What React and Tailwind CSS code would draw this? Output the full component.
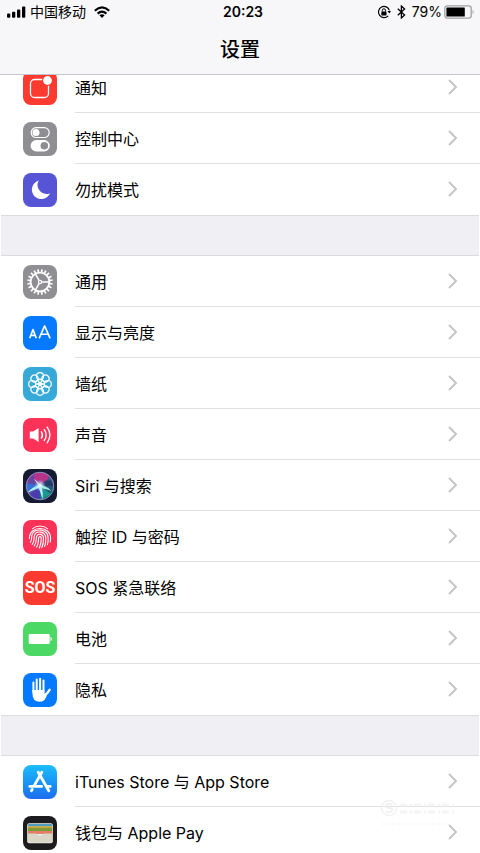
import React from 'react';

const tile = 'h-[34px] w-[34px] shrink-0 rounded-lg';

const ring = (n) => Array.from({ length: n }, (_, i) => (i * 360) / n);

function NotificationIcon() {
  return (
    <svg viewBox="0 0 34 34" className={`${tile} bg-[#fc3a30]`} aria-hidden="true">
      <rect x="7.5" y="8.5" width="18" height="18" rx="4" fill="none" stroke="#fff" strokeWidth="1.3" />
      <circle cx="24.5" cy="9.5" r="5.4" fill="#fc3a30" />
      <circle cx="24.5" cy="9.5" r="4.4" fill="#fff" />
    </svg>
  );
}

function ControlIcon() {
  return (
    <svg viewBox="0 0 34 34" className={`${tile} bg-[#8e8e93]`} aria-hidden="true">
      <rect x="8.2" y="5.7" width="18" height="9.8" rx="4.9" fill="none" stroke="#fff" strokeWidth="1.2" />
      <circle cx="13" cy="10.6" r="3.5" fill="#fff" />
      <rect x="7.6" y="18" width="19.2" height="11.4" rx="5.7" fill="#fff" />
      <circle cx="21.3" cy="23.7" r="3.8" fill="#8e8e93" />
    </svg>
  );
}

function MoonIcon() {
  return (
    <svg viewBox="0 0 34 34" className={`${tile} bg-[#5755d5]`} aria-hidden="true">
      <path d="M15.8 7.6A9.4 9.4 0 1 0 27 20.2 8.9 8.9 0 0 1 15.8 7.6Z" fill="#fff" />
    </svg>
  );
}

function GearIcon() {
  return (
    <svg viewBox="0 0 34 34" className={`${tile} bg-[#8e8e93]`} aria-hidden="true">
      <g stroke="#fff" fill="none">
        <circle cx="17" cy="17" r="9.4" strokeWidth="1.9" />
        {ring(20).map((a) => (
          <path key={a} d="M17 7.4V4.2" strokeWidth="1.7" transform={`rotate(${a + 9} 17 17)`} />
        ))}
        <circle cx="17" cy="17" r="1.6" strokeWidth="1.2" />
        {[90, 210, 330].map((a) => (
          <path key={a} d="M17 15.4V7.4" strokeWidth="1.5" transform={`rotate(${a} 17 17)`} />
        ))}
      </g>
    </svg>
  );
}

function DisplayIcon() {
  return (
    <svg viewBox="0 0 34 34" className={`${tile} bg-[#067aff]`} aria-hidden="true">
      <g fill="none" stroke="#fff" strokeLinejoin="round">
        <path d="M6.7 22.2 10 13.6 13.3 22.2M7.9 19.4H12.1" strokeWidth="1.6" />
        <path d="M16.1 22.4 21.6 9.9 27.1 22.4M18 18.3H25.2" strokeWidth="1.6" />
      </g>
    </svg>
  );
}

function WallpaperIcon() {
  return (
    <svg viewBox="0 0 34 34" className={`${tile} bg-[#36a9d8]`} aria-hidden="true">
      <g fill="none" stroke="#fff" strokeWidth="1.2">
        {ring(8).map((a) => (
          <g key={a} transform={`rotate(${a} 17 17)`}>
            <circle cx="17" cy="9.2" r="3.5" />
          </g>
        ))}
        {ring(6).map((a) => (
          <circle key={a} cx="17" cy="13.7" r="1.8" strokeWidth="0.9" transform={`rotate(${a} 17 17)`} />
        ))}
        <circle cx="17" cy="17" r="1.1" fill="#fff" />
      </g>
    </svg>
  );
}

function SoundIcon() {
  return (
    <svg viewBox="0 0 34 34" className={`${tile} bg-[#fc3259]`} aria-hidden="true">
      <path d="M6.8 13.6H10.2L15.6 10V24L10.2 20.4H6.8Z" fill="#fff" />
      <g fill="none" stroke="#fff" strokeWidth="1.4" strokeLinecap="round">
        <path d="M18.4 13.8Q20.5 17 18.4 20.2" />
        <path d="M21.3 11.6Q25 17 21.3 22.4" />
        <path d="M24.2 9.2Q29.6 17 24.2 24.8" />
      </g>
    </svg>
  );
}

function SiriIcon() {
  return (
    <svg viewBox="0 0 34 34" className={`${tile} bg-[#161a33]`} aria-hidden="true">
      <defs>
        <radialGradient id="siriCore">
          <stop offset="0" stopColor="#fff" />
          <stop offset="0.3" stopColor="#d8f5ff" stopOpacity="0.8" />
          <stop offset="1" stopColor="#7ac8f0" stopOpacity="0" />
        </radialGradient>
        <linearGradient id="siriOrb" x1="0" y1="0.2" x2="1" y2="0.8">
          <stop offset="0" stopColor="#7a3a9e" />
          <stop offset="0.5" stopColor="#48559e" />
          <stop offset="1" stopColor="#0d5c60" />
        </linearGradient>
        <clipPath id="siriClip">
          <circle cx="17" cy="17" r="13.5" />
        </clipPath>
      </defs>
      <circle cx="17" cy="17" r="14" fill="url(#siriOrb)" />
      <g clipPath="url(#siriClip)">
        <path d="M17 17C8 9 9 3 20 3C28 5 28 10 17 17Z" fill="#c82f86" opacity="0.85" />
        <path d="M17 17C23 9 29 10 31 17Z" fill="#22355f" opacity="0.8" />
        <path d="M17 17 3 14V24Z" fill="#3275db" opacity="0.9" />
        <path d="M17 17 6 27 16 32Z" fill="#4a3bb0" />
        <path d="M17 17 18 31 28 25Z" fill="#18a996" opacity="0.8" />
        <path d="M18 15C12 17 7 20 4.5 24C10 21 14 20 18 18Z" fill="#aeefff" />
        <path d="M17 16C20 20 20 26 19.5 30C18 25 17 21 15 18Z" fill="#c9f8ff" />
        <path d="M16 16C21 16 26 19 28.5 22C24 20 20 20 16 18Z" fill="#9cf0dc" />
        <path d="M17 17C16 13 13 11 11 10C14 14 15 16 17 17Z" fill="#f0bff2" />
      </g>
      <circle cx="17" cy="16.5" r="6" fill="url(#siriCore)" />
      <circle cx="17" cy="17" r="13.8" fill="none" stroke="#a2a0c5" strokeWidth="0.8" />
    </svg>
  );
}

function TouchIcon() {
  return (
    <svg viewBox="0 0 34 34" className={`${tile} bg-[#fc3259]`} aria-hidden="true">
      <g fill="none" stroke="#fff" strokeWidth="1.1" strokeLinecap="round">
        <path d="M9.6 8.6C13.8 5.2 20.2 5.2 24.4 8.6" />
        <path d="M6.4 18.5C6 5.2 28 5.2 27.6 18.5Q27.6 20.5 27.2 22" />
        <path d="M7.4 22.2C9.6 19 8.2 17 9 14.6C11.4 7.6 25.2 8.4 25.2 18.4Q25.2 21.8 24.4 24.6" />
        <path d="M9.2 24.4C12 20.4 10.6 18.6 11.3 15.8C13 10 22.8 11 22.8 18.4Q22.8 22.8 21.6 26.6" />
        <path d="M11.2 26C14 22 12.9 19.5 13.5 16.8C14.6 13 20.5 13.6 20.5 18.4Q20.5 23.6 18.8 27.8" />
        <path d="M13.6 27.2C16.2 23 15.1 20 15.7 17.7C16.3 15.9 18.3 16.4 18.3 18.4Q18.3 23.6 16.3 28" />
      </g>
    </svg>
  );
}

function SosIcon() {
  return (
    <span
      className={`${tile} flex items-center justify-center bg-[#fc3b30] font-['Liberation_Sans_Narrow','Roboto',sans-serif] text-base font-bold text-white`}
      aria-hidden="true"
    >
      SOS
    </span>
  );
}

function BatteryTileIcon() {
  return (
    <svg viewBox="0 0 34 34" className={`${tile} bg-[#4cd864]`} aria-hidden="true">
      <rect x="5.7" y="12" width="21" height="10" rx="1" fill="#fff" />
      <path d="M27.8 15.2Q29.4 17 27.8 18.8Z" fill="#fff" stroke="#fff" strokeWidth="0.5" />
    </svg>
  );
}

function HandIcon() {
  return (
    <svg viewBox="0 0 34 34" className={`${tile} bg-[#067aff]`} aria-hidden="true">
      <g stroke="#fff" strokeLinecap="round" fill="none">
        <path d="M10.4 19V9.4M13.7 17V6.4M17.1 17V5.8M20.5 18V7.6" strokeWidth="2" />
        <path d="M21.6 22.5Q24.2 20.6 26.6 16.8" strokeWidth="2.4" />
      </g>
      <path d="M9.4 17H21.5V20.8L24.4 20Q22.8 28.8 16.7 28.8Q9.4 28.8 9.4 20Z" fill="#fff" />
    </svg>
  );
}

function AppStoreIcon() {
  return (
    <svg viewBox="0 0 34 34" className={`${tile} bg-linear-to-b from-[#1fbdfb] to-[#1f6cee]`} aria-hidden="true">
      <g stroke="#fff" strokeWidth="2.8" strokeLinecap="round" fill="none">
        <path d="M18.8 7.3 11.2 20.6" />
        <path d="M15.2 7.3 25.8 25.8" />
        <path d="M6.8 21.4H18.6" />
        <path d="M23.8 21.4H27.2" />
        <path d="M9.2 24.4 8.4 25.8" />
      </g>
    </svg>
  );
}

function WalletIcon() {
  return (
    <svg viewBox="0 0 34 34" className={`${tile} bg-[#1c1c1e]`} aria-hidden="true">
      <rect x="4.2" y="7.2" width="25.6" height="20" rx="2" fill="#f0eee6" />
      <path d="M5 10.4V9Q5 8 6 8H28Q29 8 29 9V10.4Z" fill="#4f9dbd" />
      <rect x="5" y="10.2" width="24" height="2" fill="#c9a53b" />
      <rect x="5" y="12" width="24" height="3" fill="#7c9c3a" />
      <rect x="5" y="15" width="24" height="3" fill="#e67b67" />
      <path d="M5 17.4H12.6Q14 17.4 14.6 18.6Q17 21 19.4 18.6Q20 17.4 21.4 17.4H29V25.4Q29 26.4 28 26.4H6Q5 26.4 5 25.4Z" fill="#d9d6c8" />
    </svg>
  );
}

const groups = [
  [
    ['通知', NotificationIcon],
    ['控制中心', ControlIcon],
    ['勿扰模式', MoonIcon],
  ],
  [
    ['通用', GearIcon],
    ['显示与亮度', DisplayIcon],
    ['墙纸', WallpaperIcon],
    ['声音', SoundIcon],
    ['Siri 与搜索', SiriIcon],
    ['触控 ID 与密码', TouchIcon],
    ['SOS 紧急联络', SosIcon],
    ['电池', BatteryTileIcon],
    ['隐私', HandIcon],
  ],
  [
    ['iTunes Store 与 App Store', AppStoreIcon],
    ['钱包与 Apple Pay', WalletIcon],
  ],
];

function Chevron() {
  return (
    <svg viewBox="0 0 10 16" className="h-4 w-[10px] shrink-0" aria-hidden="true">
      <path d="M1 1 8 8 1 15" fill="none" stroke="#c4c4c8" strokeWidth="1.9" />
    </svg>
  );
}

function Row({ label, Icon, last }) {
  return (
    <li>
      <button type="button" className="flex h-[51px] w-full items-center pl-[23px] text-left">
        <Icon />
        <span
          className={`ml-[18px] flex h-full min-w-0 flex-1 items-center justify-between border-b pr-[22px] ${last ? 'border-transparent' : 'border-[#e0e0e3]'}`}
        >
          <span className="truncate pt-0.5">{label}</span>
          <Chevron />
        </span>
      </button>
    </li>
  );
}

function StatusBar() {
  return (
    <div className="grid h-6 grid-cols-[1fr_auto_1fr] items-center pr-[5px] pl-[7px] text-sm">
      <div className="flex items-center">
        <svg viewBox="0 0 19 12" className="mr-1 h-3 w-[19px]" aria-hidden="true">
          <rect x="0" y="7.6" width="3.3" height="4.2" rx="1" />
          <rect x="5" y="5.8" width="3.3" height="6" rx="1" />
          <rect x="10" y="3.4" width="3.3" height="8.4" rx="1" />
          <rect x="15" y="0.6" width="3.3" height="11.2" rx="1" />
        </svg>
        <span>中国移动</span>
        <svg viewBox="0 0 16 12" className="ml-2 h-3 w-4" aria-hidden="true">
          <g fill="none" stroke="#000" strokeWidth="2.2">
            <path d="M0.8 4.7Q8-2 15.2 4.7" />
            <path d="M3.6 7.6Q8 3.6 12.4 7.6" />
          </g>
          <path d="M8 12 5.4 9.3Q8 7.2 10.6 9.3Z" />
        </svg>
      </div>
      <time className="pl-1 font-semibold">20:23</time>
      <div className="flex items-center justify-end">
        <svg viewBox="0 0 14 14" className="mr-1.5 h-[14px] w-[14px]" aria-hidden="true">
          <path d="M12.4 5.4A5.6 5.6 0 1 0 11.2 10.8" fill="none" stroke="#000" strokeWidth="1.2" />
          <path d="M10.4 6H14L12.5 8.6Z" />
          <rect x="4.3" y="6.4" width="5.2" height="4" rx="0.6" />
          <path d="M5.3 6.6V5.2Q5.3 3.8 6.9 3.8T8.5 5.2V6.6" fill="none" stroke="#000" />
        </svg>
        <svg viewBox="0 0 9 14" className="mr-1.5 h-[14px] w-[9px]" aria-hidden="true">
          <path d="M0.8 3.8 7.6 10 4.4 13V1L7.6 4 0.8 10.2" fill="none" stroke="#000" strokeWidth="1.3" />
        </svg>
        <span>79%</span>
        <svg viewBox="0 0 31 14" className="ml-0.5 h-[14px] w-[31px]" aria-hidden="true">
          <rect x="0.8" y="0.8" width="26.4" height="12.4" rx="2.6" fill="none" stroke="#a2a2a5" strokeWidth="1.3" />
          <rect x="2.4" y="2.4" width="18.4" height="9.2" rx="0.6" />
          <path d="M28.6 4.6Q30.6 7 28.6 9.4Z" fill="#a2a2a5" />
        </svg>
      </div>
    </div>
  );
}

function Stamp() {
  return (
    <svg
      viewBox="0 0 80 34"
      className="pointer-events-none absolute right-5 bottom-5 h-[34px] w-20"
      aria-hidden="true"
    >
      <g fill="none" stroke="#f1f1f1">
        <circle cx="9" cy="9" r="7.5" strokeWidth="1.4" />
        <path d="M12.4 6Q9 3.6 6.4 6T9 9T11.6 12T5.8 12.4" strokeWidth="1.8" />
        <path d="M20 6H75M20 13H75" strokeWidth="3" strokeDasharray="7 3 2 2" opacity="0.7" />
        <path d="M2 25H68" strokeWidth="3" strokeDasharray="3 2" opacity="0.3" />
      </g>
    </svg>
  );
}

export default function App() {
  return (
    <div className="relative flex h-screen flex-col overflow-hidden bg-white font-['Inter','Noto_Sans_CJK_SC',sans-serif] text-base text-black">
      <header className="z-10 h-[75px] shrink-0 border-b border-[#c5c5c9] bg-[#f7f7f9]">
        <StatusBar />
        <h1 className="flex h-[50px] items-center justify-center pt-0.5 text-xl font-medium">设置</h1>
      </header>
      <main className="-mt-[13px] flex shrink-0 flex-col">
        {groups.map((rows, g) => (
          <React.Fragment key={g}>
            {g > 0 && <div className="mx-px h-[41px] border-y border-[#dcdce0] bg-[#efeff4]" />}
            <ul>
              {rows.map(([label, Icon], i) => (
                <Row key={label} label={label} Icon={Icon} last={i === rows.length - 1} />
              ))}
            </ul>
          </React.Fragment>
        ))}
      </main>
      <Stamp />
    </div>
  );
}
